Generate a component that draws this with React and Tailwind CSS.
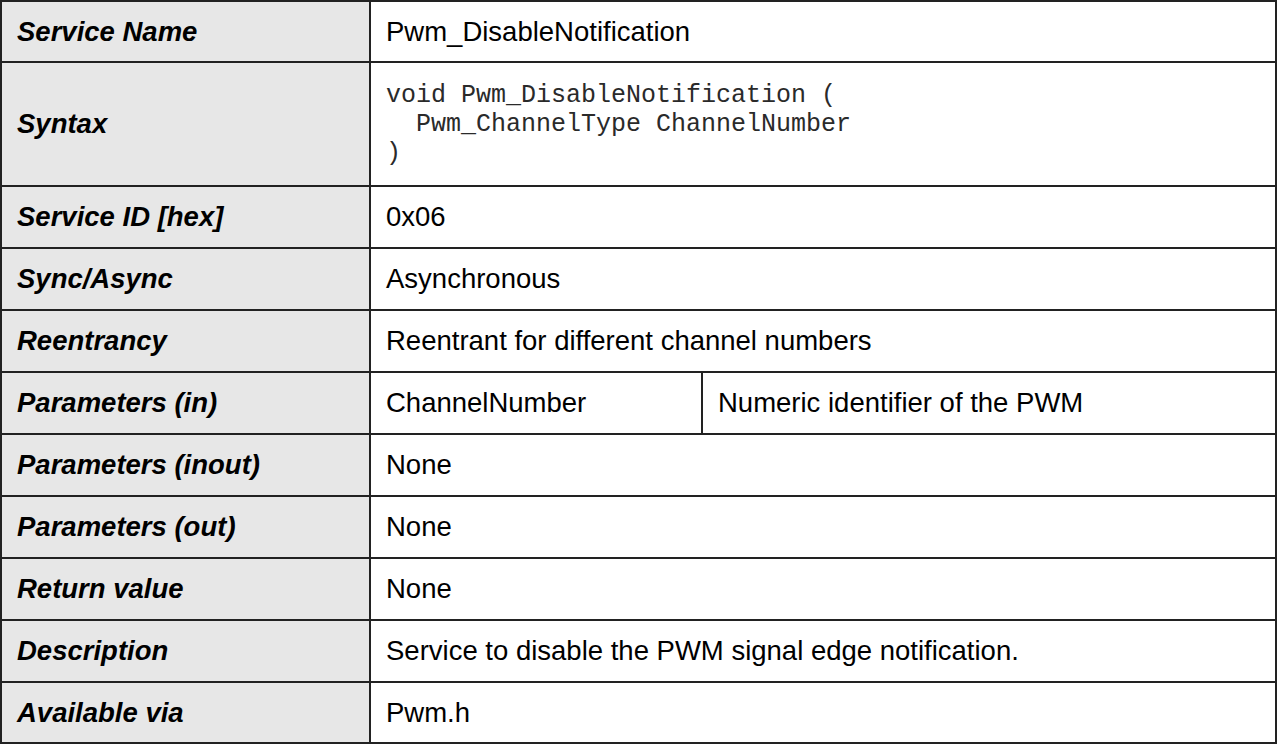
const rows = [
  { label: 'Service Name', value: 'Pwm_DisableNotification', h: 'h-[61px]' },
  { label: 'Syntax', syntax: true, h: 'h-[124px]' },
  { label: 'Service ID [hex]', value: '0x06', h: 'h-[62px]' },
  { label: 'Sync/Async', value: 'Asynchronous', h: 'h-[62px]' },
  { label: 'Reentrancy', value: 'Reentrant for different channel numbers', h: 'h-[62px]' },
  { label: 'Parameters (in)', param: ['ChannelNumber', 'Numeric identifier of the PWM'], h: 'h-[62px]' },
  { label: 'Parameters (inout)', value: 'None', h: 'h-[62px]' },
  { label: 'Parameters (out)', value: 'None', h: 'h-[62px]' },
  { label: 'Return value', value: 'None', h: 'h-[62px]' },
  { label: 'Description', value: 'Service to disable the PWM signal edge notification.', h: 'h-[62px]' },
  { label: 'Available via', value: 'Pwm.h', h: 'flex-1' },
];

function ValueCell({ row }) {
  if (row.syntax) {
    return (
      <div className="flex flex-col justify-center pl-[15px] font-['Liberation_Mono',monospace] text-[25px] leading-[29px] text-[#2a2a2a] whitespace-pre">
        <div>void Pwm_DisableNotification (</div>
        <div>  Pwm_ChannelType ChannelNumber</div>
        <div>)</div>
      </div>
    );
  }
  if (row.param) {
    return (
      <div className="flex">
        <div className="flex w-[332px] items-center border-r-2 border-[#222] pl-[15px]">{row.param[0]}</div>
        <div className="flex flex-1 items-center pl-[15px]">{row.param[1]}</div>
      </div>
    );
  }
  return <div className="flex items-center pl-[15px]">{row.value}</div>;
}

export default function App() {
  return (
    <div className="h-[744px] w-[1277px] bg-white font-['Liberation_Sans',Arial,sans-serif] text-[27.5px] text-black">
      <div className="flex h-full flex-col border-2 border-[#222]">
        {rows.map((row, i) => (
          <div
            key={row.label}
            className={`grid shrink-0 grid-cols-[369px_1fr] ${row.h} ${i < rows.length - 1 ? 'border-b-2 border-[#222]' : ''}`}
          >
            <div className="flex items-center border-r-2 border-[#222] bg-[#e7e7e7] pl-[15px] font-bold italic">
              {row.label}
            </div>
            <ValueCell row={row} />
          </div>
        ))}
      </div>
    </div>
  );
}
